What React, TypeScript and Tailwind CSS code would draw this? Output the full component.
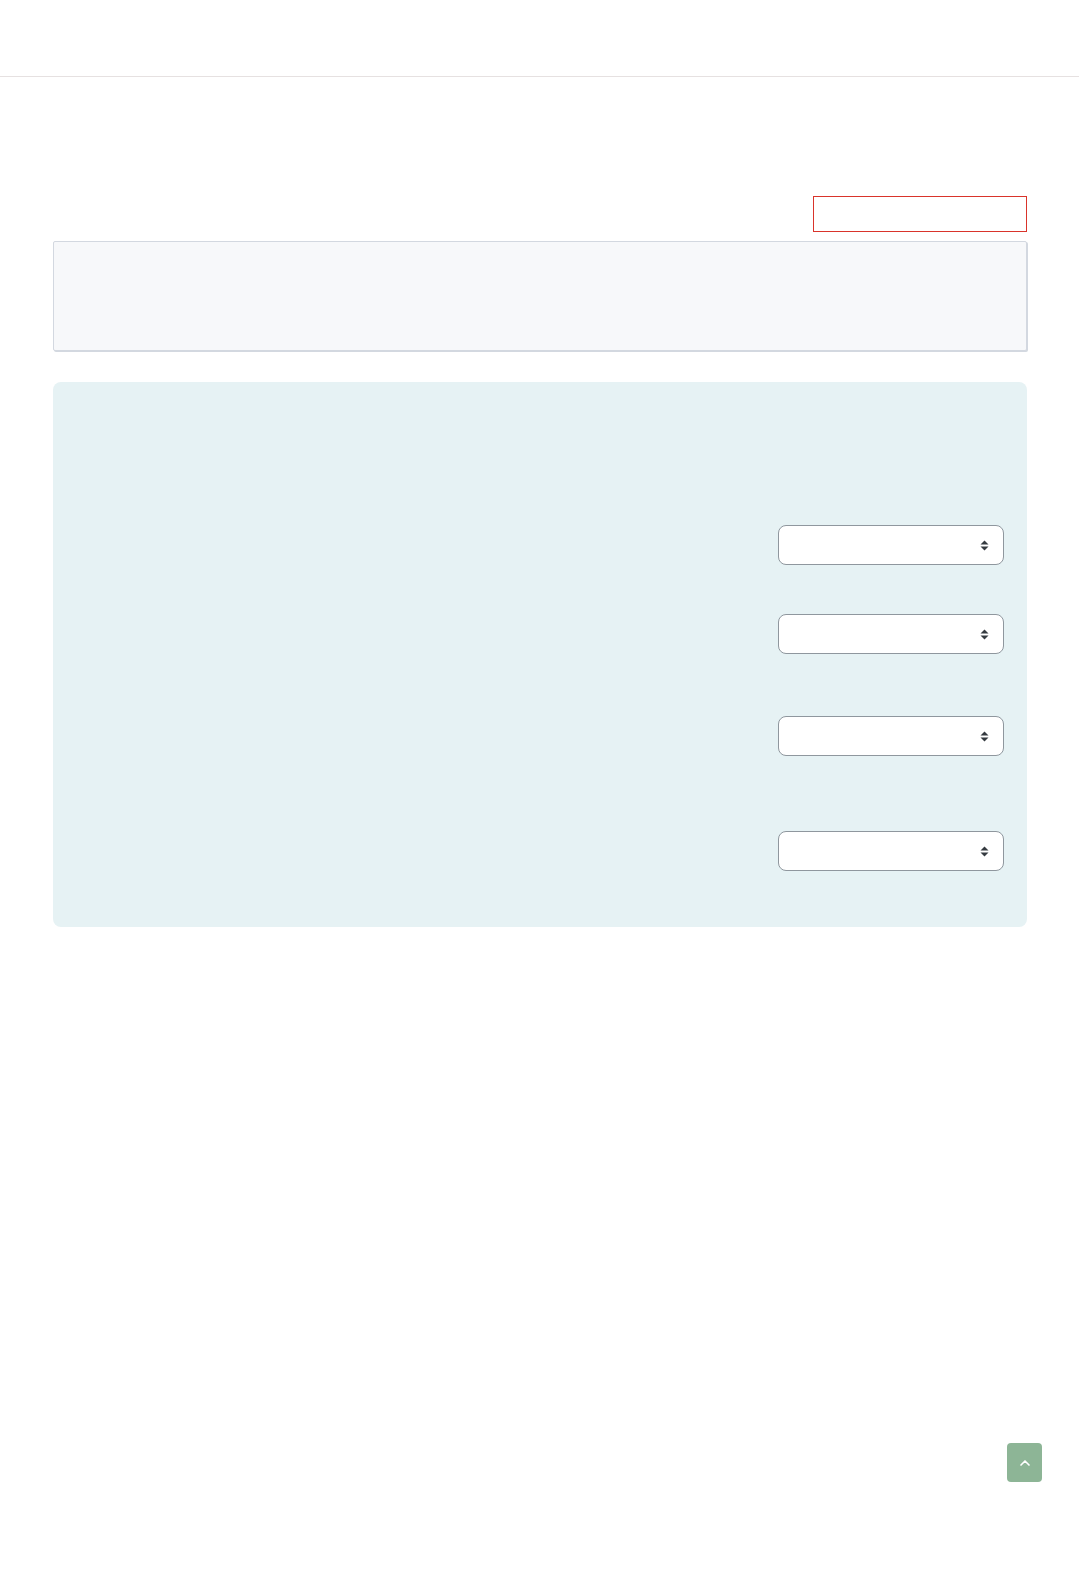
import { ChevronUp } from "lucide-react";

const ROWS = [
  { mt: "mt-[143px]" },
  { mt: "mt-[49px]" },
  { mt: "mt-[62px]" },
  { mt: "mt-[75px]" },
];

function SortArrows() {
  return (
    <svg width="9" height="11" viewBox="0 0 9 11" className="shrink-0">
      <path d="M4.5 0.5 L8.5 4.5 H0.5 Z" fill="#343a40" />
      <path d="M4.5 10.5 L8.5 6.5 H0.5 Z" fill="#343a40" />
    </svg>
  );
}

function FakeSelect() {
  return (
    <div className="flex h-[40px] w-[226px] items-center justify-end rounded-[8px] border border-[#8f979e] bg-white pr-[14px]">
      <SortArrows />
    </div>
  );
}

export default function App() {
  return (
    <div className="min-h-[1571px] bg-white font-['Liberation_Sans',sans-serif]">
      {/* Header */}
      <header className="h-[77px] border-b border-[#e6e1e1]" />

      <main className="mx-auto w-[974px] pb-[40px]">
        {/* Toolbar */}
        <div className="mt-[119px] flex justify-end">
          <div className="h-[36px] w-[214px] border border-[#d9342b] bg-white" />
        </div>

        {/* Info panel */}
        <div className="mt-[9px] h-[110px] rounded-[2px] border border-[#d3d8e0] bg-[#f7f8fa] shadow-[1px_1px_0_#d3d8e0]" />

        {/* Filter panel */}
        <section className="mt-[31px] flex h-[545px] flex-col rounded-[8px] bg-[#e6f2f4] pr-[23px]">
          {ROWS.map((r, i) => (
            <div key={i} className={`${r.mt} flex justify-end`}>
              <FakeSelect />
            </div>
          ))}
        </section>
      </main>

      {/* Back to top */}
      <button
        type="button"
        className="fixed bottom-[89px] right-[37px] flex h-[39px] w-[35px] items-center justify-center rounded-[4px] bg-[#8db596] text-white"
      >
        <ChevronUp className="h-[16px] w-[16px]" strokeWidth={2.5} />
      </button>
    </div>
  );
}
